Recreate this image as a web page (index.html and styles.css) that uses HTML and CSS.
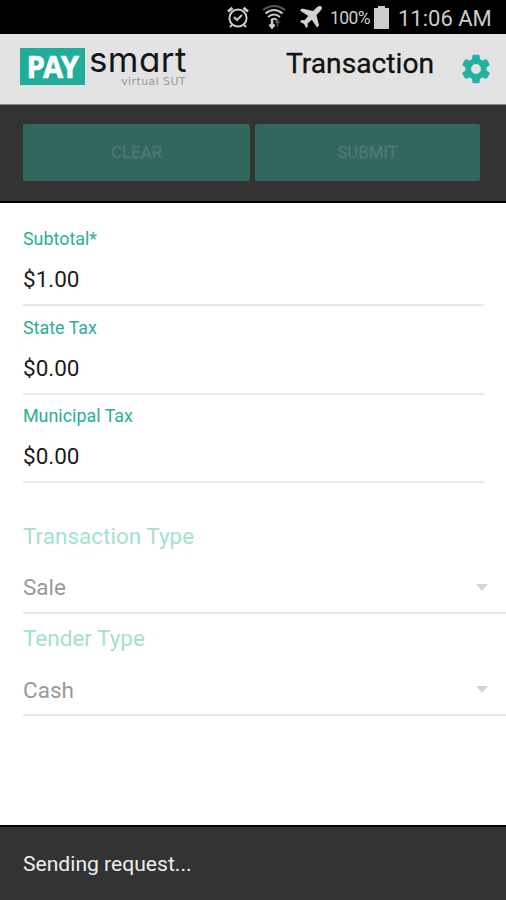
FILE: index.html
```html
<!DOCTYPE html>
<html lang="en">
<head>
<meta charset="utf-8">
<title>PAYsmart Transaction</title>
<link rel="stylesheet" href="styles.css">
</head>
<body>
<div class="screen">
  <div class="status">
    <svg class="alarm" width="24" height="24" viewBox="0 0 24 24" fill="none" stroke="#ccc" stroke-width="2"><circle cx="12" cy="13" r="8.6"/><path d="M2 6.5 6.5 2.8M22 6.5 17.500 2.800" stroke-width="2.800"/><path d="m8 12 3 3 5-5M6 20l-2 2M18 20l2 2"/></svg>
    <svg class="wifi" width="24" height="26" viewBox="0 0 24 26" fill="none" stroke="#ccc" stroke-width="2"><path d="M1 6Q12-2 23 6" stroke="#555"/><path d="M3.500 9.500Q12 2.500 20.500 9.500M6 13Q12 8 18 13M9 16Q12 13.500 15 16"/><path d="M10 16v7M7.500 20.500 10 23.500l2.500-3" stroke-width="2.500"/><path d="M15.500 23v-6M13.500 19l2-2.500 2 2.500" stroke="#555" stroke-width="1.500"/></svg>
    <svg class="plane" width="24" height="24" viewBox="0 0 24 24" fill="#d2d2d2"><path d="M22.500 1.500c1 1 .3 3-1 4.300L17.500 10 20 20.500l-2 2L12.800 14.800 8.500 18.500l.3 3-1.500 1.500-2.300-4-4-2.300L2.500 15l3 .3 3.800-4.200L1 5.500l2-2L14 6l4.200-3.900c1.300-1.200 3.300-1.600 4.300-.6z"/></svg>
    <span class="percent">100%</span>
    <svg class="battery" width="15" height="23" viewBox="0 0 15 23" fill="#ccc"><path d="M4 0h7v2h4v21H0V2h4z"/></svg>
    <span class="clock">11:06 AM</span>
  </div>
  <header class="header">
    <div class="logo">
      <div class="pay"><span>PAY</span></div>
      <div class="brand"><span class="smart">smart</span><span class="sut">virtual SUT</span></div>
    </div>
    <h1>Transaction</h1>
    <svg class="gear" width="34" height="34" viewBox="0 0 24 24" fill="#23b2a0"><path d="M19.430 12.980c.04-.32.070-.64.070-.98s-.03-.66-.07-.98l2.110-1.650c.19-.15.240-.42.120-.64l-2-3.460c-.12-.22-.39-.3-.61-.22l-2.490 1c-.52-.4-1.080-.73-1.690-.98l-.38-2.650A.49.490 0 0 0 14 2h-4c-.25 0-.46.180-.49.420l-.38 2.650c-.61.250-1.170.590-1.690.98l-2.490-1c-.23-.09-.49 0-.61.220l-2 3.460c-.13.220-.07.490.120.640l2.110 1.650c-.04.320-.07.650-.07.980s.03.660.070.980l-2.110 1.650c-.19.150-.24.420-.12.640l2 3.460c.12.220.390.300.610.220l2.490-1c.52.400 1.080.730 1.690.980l.38 2.650c.03.240.240.420.490.420h4c.25 0 .46-.18.490-.42l.38-2.650c.61-.25 1.170-.59 1.690-.98l2.490 1c.23.090.490 0 .61-.22l2-3.460c.12-.22.070-.49-.12-.64zM12 15.500a3.500 3.500 0 1 1 0-7 3.500 3.500 0 0 1 0 7z"/></svg>
  </header>
  <div class="actions">
    <button disabled>CLEAR</button>
    <button disabled>SUBMIT</button>
  </div>
  <main class="form">
    <div class="field"><label>Subtotal*</label><div class="value">$1.00</div></div>
    <div class="field"><label>State Tax</label><div class="value">$0.00</div></div>
    <div class="field"><label>Municipal Tax</label><div class="value">$0.00</div></div>
    <div class="choice first"><label>Transaction Type</label><div class="picked"><span>Sale</span><i class="caret"></i></div></div>
    <div class="choice"><label>Tender Type</label><div class="picked"><span>Cash</span><i class="caret"></i></div></div>
  </main>
  <footer class="message"><span>Sending request...</span></footer>
</div>
</body>
</html>
```

FILE: styles.css
```css
* { box-sizing: border-box; }
body { margin: 0; font-family: Roboto, sans-serif; background: #fff; }
.screen { width: 506px; height: 900px; display: flex; flex-direction: column; overflow: hidden; }
.status { height: 34px; background: #000; display: flex; align-items: center; color: #ccc; padding: 0 0 0 226px; white-space: nowrap; }
.status svg { flex: none; }
.wifi { margin-left: 12px; }
.plane { margin-left: 13px; }
.percent { font-size: 17.5px; width: 40px; margin-left: 7px; letter-spacing: -.6px; padding-top: 2px; }
.battery { margin-left: 4px; }
.clock { font-size: 22px; margin-left: 9px; padding-top: 3px; }
.header { height: 71px; background: #e3e3e3; border-bottom: 1px solid #888; display: flex; padding-left: 20px; }
.logo { display: flex; padding-top: 14px; width: 266px; }
.pay { width: 65px; height: 37px; background: #20ad99; color: #fff; font: bold 30px/38px "Noto Sans", sans-serif; text-align: center; -webkit-text-stroke: .6px #fff; }
.pay span { display: inline-block; transform: scaleX(.97); margin: 0 -4px; letter-spacing: -.5px; }
.brand { width: 103px; display: flex; flex-direction: column; }
.smart { font: 400 35px/22px Inter, sans-serif; font-feature-settings: "cv11"; letter-spacing: .4px; color: #151515; padding-left: 4px; height: 27px; }
.sut { font: 11px/13px "DejaVu Sans", sans-serif; color: #999; text-align: right; padding-right: 2px; letter-spacing: .4px; }
h1 { font-size: 28.2px; font-weight: 400; line-height: 32px; margin: 14px 0 0; width: 173px; color: #111; -webkit-text-stroke: .3px #111; }
.gear { margin-top: 18px; }
.actions { height: 98px; background: #333; border-bottom: 2px solid #000; padding: 19px 26px 0 23px; display: flex; gap: 5px; }
.actions button { width: 227px; height: 57px; border: 0; border-radius: 2px; background: #32675f; color: #557871; font: 400 16.8px Roboto, sans-serif; padding: 0 0 2px; -webkit-text-stroke: .3px #557871; }
.actions button + button { width: 225px; }
.form { flex: 1; padding: 25px 0 0 23px; }
.field { height: 88.6px; width: 461px; }
.field label { display: block; font-size: 17.9px; line-height: 22px; color: #2aae97; }
.value { font-size: 22.5px; line-height: 30px; height: 56px; padding-top: 14px; border-bottom: 2px solid #e8e8e8; color: #1c1c1c; }
.choice { height: 102.500px; }
.choice.first { margin-top: 27px; }
.choice label { display: block; font-size: 22.5px; line-height: 30px; color: #a5dfd2; }
.picked { display: flex; justify-content: space-between; align-items: center; height: 63px; padding: 12px 18px 0 0; border-bottom: 2px solid #e8e8e8; font-size: 22.5px; line-height: 30px; color: #999; }
.caret { border: 6.500px solid transparent; border-top: 7px solid #d4d4d4; border-bottom: 0; }
.message { height: 75px; background: #333; border-top: 2px solid #000; color: #eee; font-size: 21.1px; line-height: 30px; padding: 22px 23px; }
```
